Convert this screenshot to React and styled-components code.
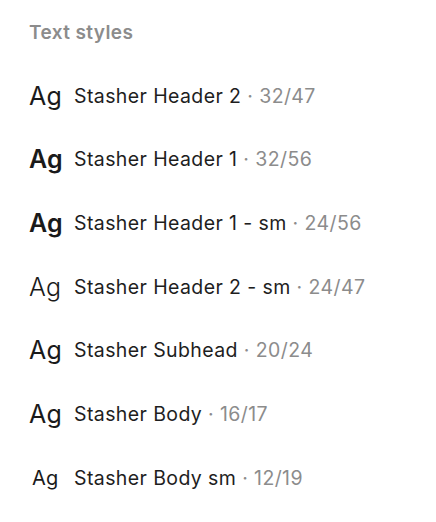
import React from 'react'
import styled, { createGlobalStyle } from 'styled-components'

const Global = createGlobalStyle`
body{
  margin:0;
  background:#fff;
  font-family:Inter,"Noto Sans",sans-serif;
}
`

const Panel = styled.div`
display:flex;
flex-direction:column;
width:436px;
height:522px;
box-sizing:border-box;
padding:21px 0 0 29px;
`

const Title = styled.div`
font-size:19px;
font-weight:600;
color:#8c8c8c;
letter-spacing:0.4px;
line-height:24px;
height:43px;
`

const Row = styled.div`
display:flex;
flex-direction:row;
align-items:center;
height:63.67px;
`

const Sample = styled.span`
width:45px;
font-size:${p => p.size}px;
font-weight:${p => p.weight};
color:#1a1a1a;
padding-left:${p => p.indent || 0}px;
box-sizing:border-box;
letter-spacing:0.3px;
`

const Name = styled.span`
font-size:19.5px;
letter-spacing:0.4px;
color:#1e1e1e;
`

const Meta = styled.span`
font-size:19.5px;
letter-spacing:0.4px;
color:#8c8c8c;
`

const styles = [
  { name: 'Stasher Header 2', meta: '32/47', size: 25, weight: 400 },
  { name: 'Stasher Header 1', meta: '32/56', size: 25, weight: 600 },
  { name: 'Stasher Header 1 - sm', meta: '24/56', size: 25, weight: 600 },
  { name: 'Stasher Header 2 - sm', meta: '24/47', size: 25, weight: 300 },
  { name: 'Stasher Subhead', meta: '20/24', size: 25, weight: 400 },
  { name: 'Stasher Body', meta: '16/17', size: 25, weight: 400 },
  { name: 'Stasher Body sm', meta: '12/19', size: 20, weight: 400, indent: 3 },
]

export default function App() {
  return (
    <>
      <Global />
      <Panel>
        <Title>Text styles</Title>
        {styles.map(s => (
          <Row key={s.name}>
            <Sample size={s.size} weight={s.weight} indent={s.indent}>Ag</Sample>
            <Name>{s.name}</Name>
            <Meta>&nbsp;· {s.meta}</Meta>
          </Row>
        ))}
      </Panel>
    </>
  )
}
